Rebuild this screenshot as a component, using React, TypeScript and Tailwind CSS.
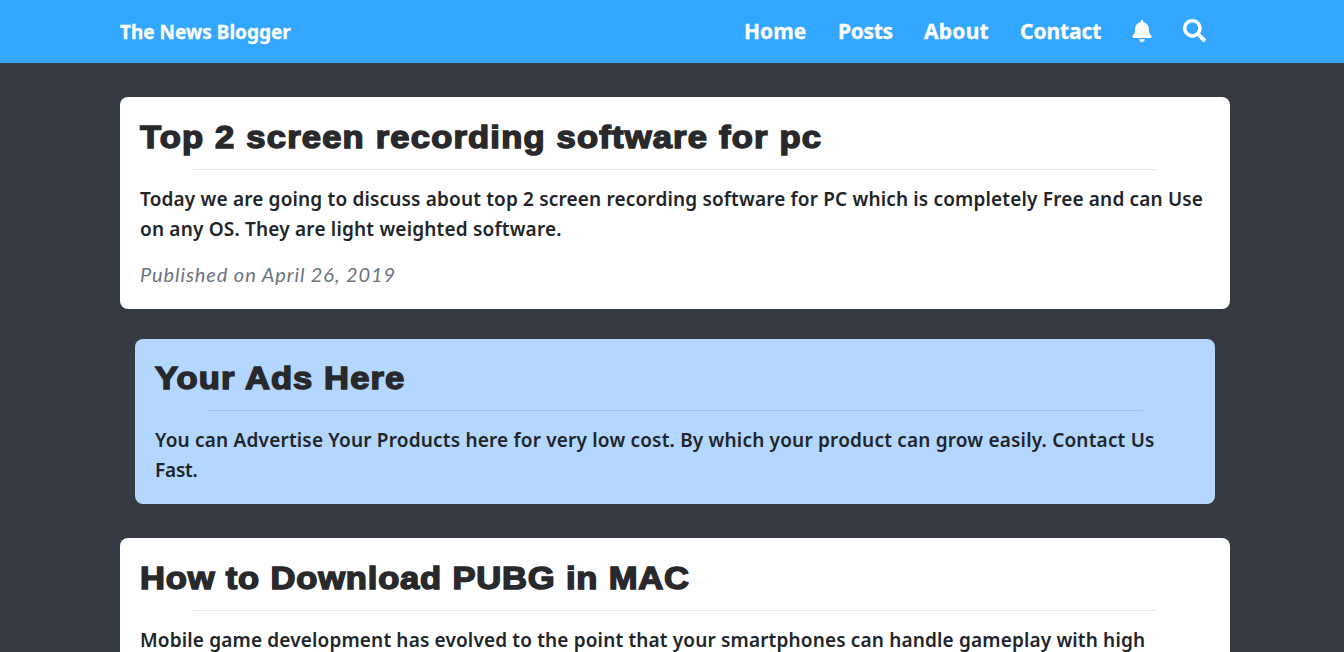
import type { ReactNode } from "react";
import { FaBell, FaSearch } from "react-icons/fa";

function Title({ children, className }: { children: ReactNode; className: string }) {
  return (
    <h2
      className={`origin-left scale-x-[1.08] font-['Liberation_Sans',sans-serif] text-[32px] leading-[38px] font-bold whitespace-nowrap text-[#29292c] [-webkit-text-stroke:1.5px_#29292c] ${className}`}
    >
      {children}
    </h2>
  );
}

function Rule({ className }: { className: string }) {
  return <hr className={`mt-[13px] mb-[14px] border-t border-black/10 ${className}`} />;
}

function Line({ children, className }: { children: ReactNode; className: string }) {
  return <span className={`block whitespace-nowrap ${className}`}>{children}</span>;
}

const body = "text-[19px] leading-[30px] font-semibold text-[#212529]";

export default function App() {
  return (
    <div className="h-[652px] overflow-hidden bg-[#353941] font-['Noto_Sans','Open_Sans',sans-serif]">
      <header className="flex h-[63px] items-center bg-[#33a6ff] pr-[138px] pl-[120px] font-bold text-white">
        <a className="text-[19px] leading-[30px] whitespace-nowrap [-webkit-text-stroke:0.3px_white]">The News Blogger</a>
        <nav className="ml-auto flex items-center pb-0.5 text-[21px] leading-[30px] [-webkit-text-stroke:0.3px_white]">
          <a className="w-[94px] whitespace-nowrap">Home</a>
          <a className="w-[86px] tracking-[-0.3px] whitespace-nowrap">Posts</a>
          <a className="w-[96px] tracking-[0.25px] whitespace-nowrap">About</a>
          <a className="w-[111px] tracking-[-0.1px] whitespace-nowrap">Contact</a>
          <FaBell size={22} className="mr-[30px] [-webkit-text-stroke:0]" />
          <FaSearch size={23} />
        </nav>
      </header>
      <main className="flex flex-col pt-[34px] pl-[120px]">
        <article className="h-[212px] w-[1110px] rounded-lg bg-white px-5 pt-[21px]">
          <Title className="tracking-[1.1px]">Top 2 screen recording software for pc</Title>
          <Rule className="ml-[53px] w-[963px]" />
          <p className={body}>
            <Line className="tracking-[0.165px]">
              Today we are going to discuss about top 2 screen recording software for PC which is completely Free and can Use
            </Line>
            <Line className="tracking-[0.19px]">on any OS. They are light weighted software.</Line>
          </p>
          <p className="mt-[15px] font-['Lato',sans-serif] text-[20px] leading-[30px] tracking-[0.9px] whitespace-nowrap text-[#6c757d] italic">
            Published on April 26, 2019
          </p>
        </article>
        <aside className="mt-[30px] ml-[15px] h-[165px] w-[1080px] rounded-lg bg-[#b3d7ff] px-5 pt-5">
          <Title className="tracking-[1px]">Your Ads Here</Title>
          <Rule className="mx-auto w-[936px]" />
          <p className={body}>
            <Line className="tracking-[0.19px]">
              You can Advertise Your Products here for very low cost. By which your product can grow easily. Contact Us
            </Line>
            <Line className="tracking-[-0.2px]">Fast.</Line>
          </p>
        </aside>
        <article className="mt-[34px] h-[212px] w-[1110px] rounded-lg bg-white px-5 pt-[21px]">
          <Title className="tracking-[0.75px]">How to Download PUBG in MAC</Title>
          <Rule className="ml-[53px] w-[963px]" />
          <p className={body}>
            <Line className="tracking-[0.155px]">
              Mobile game development has evolved to the point that your smartphones can handle gameplay with high
            </Line>
          </p>
        </article>
      </main>
    </div>
  );
}
